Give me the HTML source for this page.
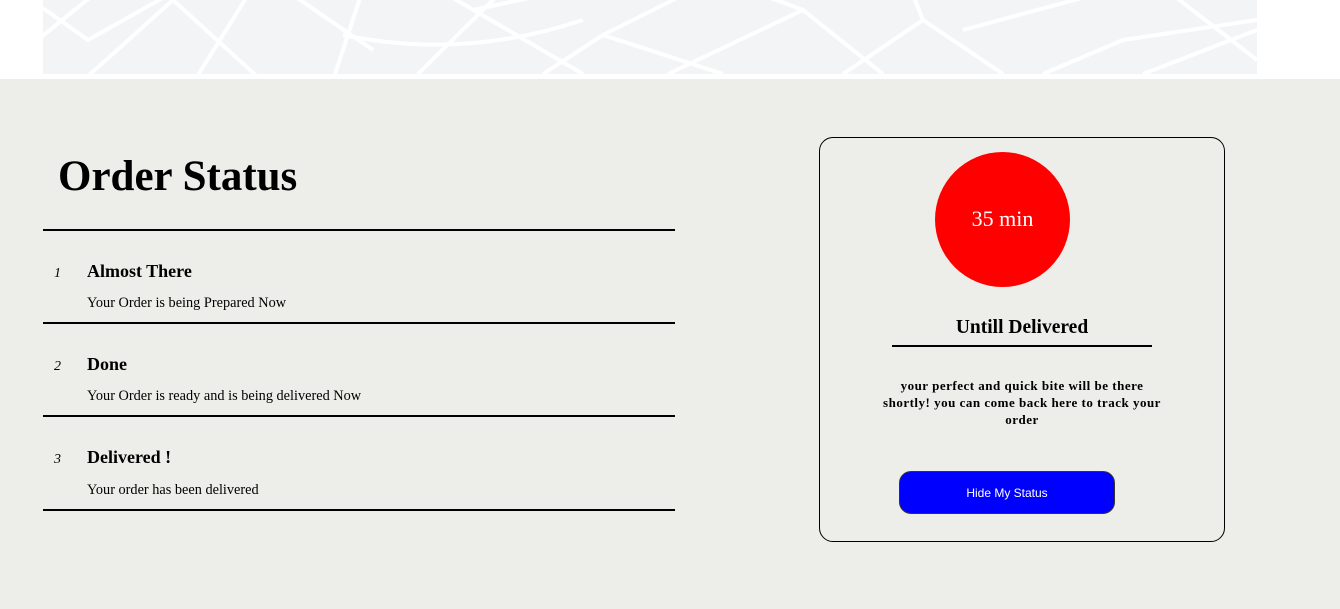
<!DOCTYPE html>
<html><head><style>
body{margin:0;width:1340px;height:609px;background:#edeee9;font-family:"Liberation Serif",serif;position:relative;overflow:hidden}
.top{position:absolute;left:0;top:0;width:1340px;height:79px;background:#fff}
.map{position:absolute;left:43px;top:0;width:1214px;height:74px;background:#f3f4f6;overflow:hidden}
.a{position:absolute;margin:0}
.hr{position:absolute;left:43px;width:632px;height:2px;background:#000}
.n{position:absolute;left:54px;font-style:italic;font-size:14px}
.h{position:absolute;left:87px;font-weight:bold;font-size:18px}
.d{position:absolute;left:87px;font-size:14.3px}
</style></head><body>
<div class="top"></div>
<div class="map"><svg width="1214" height="74" stroke="#fff" fill="none" stroke-width="4">
<path d="M-30 60 L50 -5"/><path d="M0 8 L45 40 L125 -5"/><path d="M35 85 L130 0"/><path d="M130 0 L240 100"/><path d="M155 75 L205 -5"/><path d="M250 -5 L330 50"/><path d="M292 74 L318 -5"/><path d="M405 -5 L540 74"/><path d="M300 35 Q420 60 540 20"/><path d="M375 74 L455 -5"/><path d="M430 10 L500 -5"/><path d="M500 74 L560 35 L640 -5"/><path d="M560 35 L680 74"/><path d="M625 74 L760 10 L840 74"/><path d="M720 -5 L760 10"/><path d="M800 74 L880 20 L960 74"/><path d="M870 -5 L880 20"/><path d="M920 30 L1050 -5"/><path d="M1000 74 L1080 40 L1214 20"/><path d="M1100 74 L1214 30"/><path d="M1130 -5 L1214 60"/>
</svg></div>
<h1 class="a" style="left:58px;top:152px;font-size:43px;font-weight:bold;line-height:50px">Order Status</h1>
<div class="hr" style="top:229px"></div>
<div class="hr" style="top:322px"></div>
<div class="hr" style="top:415px"></div>
<div class="hr" style="top:509px"></div>
<div class="n" style="top:266px">1</div><div class="h" style="top:261px">Almost There</div><div class="d" style="top:295px">Your Order is being Prepared Now</div>
<div class="n" style="top:359px">2</div><div class="h" style="top:354px">Done</div><div class="d" style="top:388px">Your Order is ready and is being delivered Now</div>
<div class="n" style="top:452px">3</div><div class="h" style="top:447px">Delivered !</div><div class="d" style="top:482px">Your order has been delivered</div>
<div style="position:absolute;left:819px;top:137px;width:404px;height:403px;border:1px solid #000;border-radius:14px"></div>
<div style="position:absolute;left:935px;top:152px;width:135px;height:135px;border-radius:50%;background:#f00;color:#fff;font-size:22px;line-height:133px;text-align:center">35 min</div>
<div style="position:absolute;left:882px;top:317px;width:280px;text-align:center;font-weight:bold;font-size:19.5px">Untill Delivered</div>
<div style="position:absolute;left:892px;top:345px;width:260px;height:2px;background:#000"></div>
<div style="position:absolute;left:877px;top:377px;width:290px;text-align:center;font-weight:bold;font-size:13px;letter-spacing:0.5px;line-height:17px">your perfect and quick bite will be there shortly! you can come back here to track your order</div>
<div style="position:absolute;left:899px;top:471px;width:214px;height:41px;border:1px solid #333;border-radius:12px;background:#00f;color:#fff;font-family:'Liberation Sans',sans-serif;font-size:12px;line-height:42px;text-align:center">Hide My Status</div>
</body></html>
